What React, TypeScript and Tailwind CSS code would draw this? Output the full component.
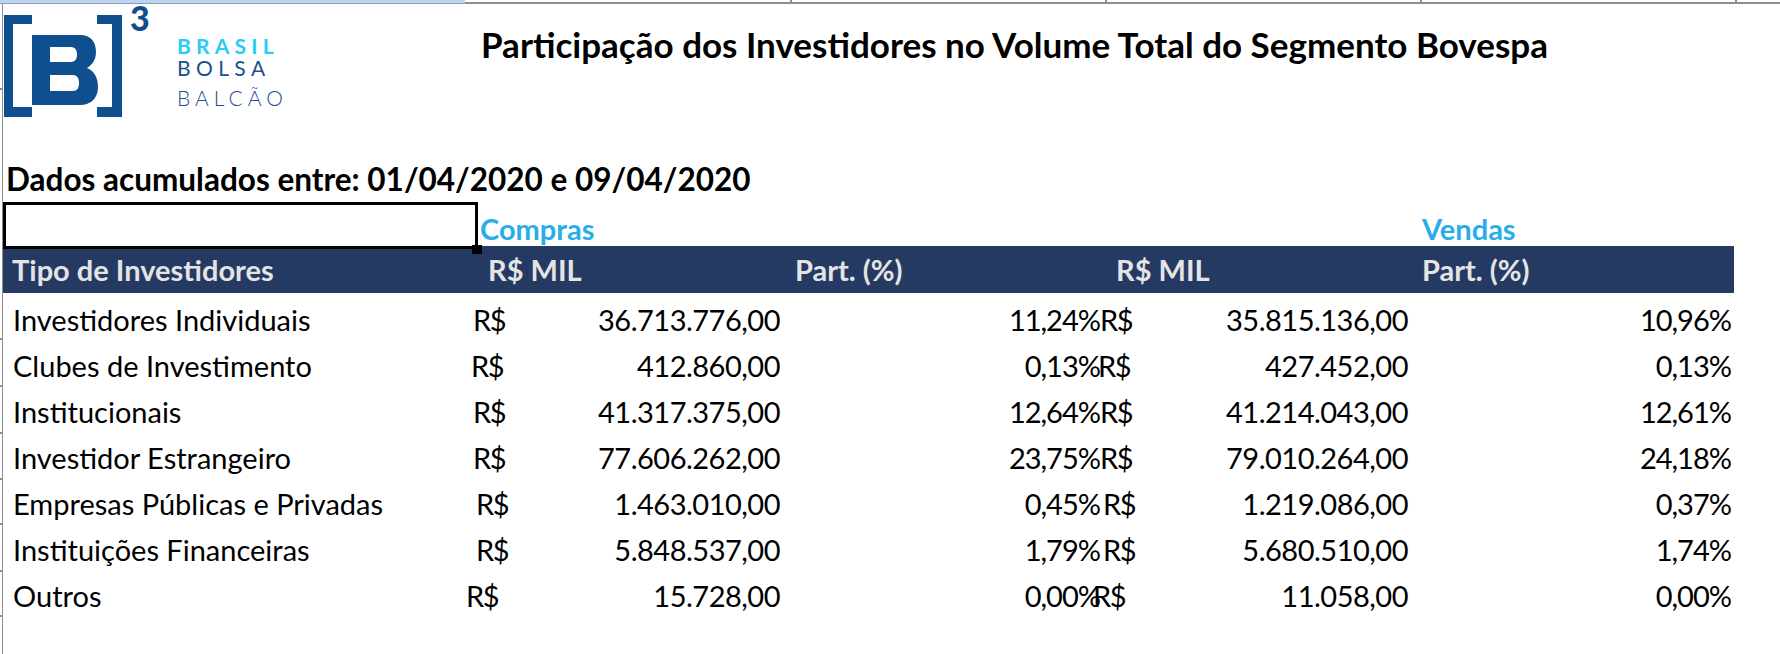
import React from 'react';

const rows = [
  { label: 'Investidores Individuais', a: '36.713.776,00', p: '11,24%', b: '35.815.136,00', q: '10,96%', o: 'ml-0' },
  { label: 'Clubes de Investimento', a: '412.860,00', p: '0,13%', b: '427.452,00', q: '0,13%', o: '-ml-[2px]' },
  { label: 'Institucionais', a: '41.317.375,00', p: '12,64%', b: '41.214.043,00', q: '12,61%', o: 'ml-0' },
  { label: 'Investidor Estrangeiro', a: '77.606.262,00', p: '23,75%', b: '79.010.264,00', q: '24,18%', o: 'ml-0' },
  { label: 'Empresas Públicas e Privadas', a: '1.463.010,00', p: '0,45%', b: '1.219.086,00', q: '0,37%', o: 'ml-[3px]' },
  { label: 'Instituições Financeiras', a: '5.848.537,00', p: '1,79%', b: '5.680.510,00', q: '1,74%', o: 'ml-[3px]' },
  { label: 'Outros', a: '15.728,00', p: '0,00%', b: '11.058,00', q: '0,00%', o: '-ml-[7px]' },
];

const ticks = [88, 338, 385, 432, 478, 523, 570, 615];

function Logo() {
  return (
    <div className="relative w-[157px] h-[121px] shrink-0">
      <svg width="157" height="121" viewBox="3 4 157 121">
        <polygon fill="#0f4e8f" points="4,15 32,15 32,24 13,24 13,107 32,107 32,117 4,117" />
        <polygon fill="#0f4e8f" points="97,15 122,15 122,117 97,117 97,107 112,107 112,24 97,24" />
        <path
          fill="#0f4e8f"
          fillRule="evenodd"
          d="M32 35 H80 C91 35 96 42 96 52 C96 60 92 65 87 68 C94 71 98 77 98 87 C98 98 91 105 80 105 H32 Z M50 47 H71 C75 47 77 50 77 54.5 C77 59 75 62 71 62 H50 Z M50 75 H73 C77 75 79 78 79 83 C79 88 77 91 73 91 H50 Z"
        />
      </svg>
      <span className="absolute left-[127px] -top-[3px] text-[34px] leading-[34px] font-black text-[#0f4e8f]">3</span>
    </div>
  );
}

export default function App() {
  return (
    <div className="relative w-[1780px] h-[654px] overflow-hidden bg-white font-['Lato',sans-serif] text-black">
      {/* top grid strip */}
      <div className="flex h-[4px]">
        <div className="w-[465px] h-[4px] bg-[#bcd3f1] border-b border-[#8d9bb0]" />
        <div className="relative flex-1 h-[4px] border-b-2 border-[#8e8e8e]">
          <div className="absolute left-[325px] top-0 w-[2px] h-[4px] bg-[#8e8e8e]" />
          <div className="absolute left-[640px] top-0 w-[2px] h-[4px] bg-[#8e8e8e]" />
          <div className="absolute left-[955px] top-0 w-[2px] h-[4px] bg-[#8e8e8e]" />
          <div className="absolute left-[1270px] top-0 w-[2px] h-[4px] bg-[#8e8e8e]" />
        </div>
      </div>

      {/* left row-header ticks */}
      {ticks.map((t) => (
        <div key={t} className="absolute left-0 w-[3px] h-[2px] bg-[#8e8e8e]" style={{ top: t }} />
      ))}

      <div className="ml-[2px] border-l border-[#8e8e8e] h-[650px]">
        {/* logo + title */}
        <div className="flex h-[154px]">
          <Logo />
          <div className="ml-[17px] mt-[31px] flex flex-col w-[140px]">
            <div className="h-[21px] leading-[21px] text-[21px] font-bold tracking-[5.2px] text-[#27cdf4]">BRASIL</div>
            <div className="mt-[1px] h-[21px] leading-[21px] text-[21px] font-normal tracking-[5.4px] text-[#1b4f90]">BOLSA</div>
            <div className="mt-[9px] h-[21px] leading-[21px] text-[21px] font-light tracking-[5px] text-[#1b4f90]">BALCÃO</div>
          </div>
          <div className="ml-[164px] mt-[20px] h-[40px] leading-[40px] text-[35px] font-bold whitespace-nowrap">
            Participação dos Investidores no Volume Total do Segmento Bovespa
          </div>
        </div>

        {/* Dados */}
        <div className="h-[44px] flex items-center pl-[3px] text-[31.5px] font-bold whitespace-nowrap">
          Dados acumulados entre: 01/04/2020 e 09/04/2020
        </div>

        {/* Compras / Vendas */}
        <div className="flex h-[44px]">
          <div className="relative w-[475px] h-[47px] border-[3px] border-black shrink-0">
            <div className="absolute -right-[7px] -bottom-[8px] w-[10px] h-[9px] bg-black" />
          </div>
          <div className="w-[944px] pl-[2px] pt-[10px] flex items-center text-[29px] font-bold text-[#27aee9]">Compras</div>
          <div className="pt-[10px] flex items-center text-[29px] font-bold text-[#27aee9]">Vendas</div>
        </div>

        {/* header band */}
        <div className="flex items-center w-[1731px] h-[47px] bg-[#243a63] text-[29px] font-bold text-[#e4e4e4] whitespace-nowrap">
          <div className="w-[485px] pl-[9px]">Tipo de Investidores</div>
          <div className="w-[307px]">R$ MIL</div>
          <div className="w-[321px]">Part. (%)</div>
          <div className="w-[306px]">R$ MIL</div>
          <div>Part. (%)</div>
        </div>

        {/* data rows */}
        <div className="pt-[4px]">
          {rows.map((r) => (
            <div key={r.label} className="flex items-center h-[46px] text-[29px] whitespace-nowrap">
              <div className="w-[463px] pl-[10px]">{r.label}</div>
              <div className="w-[120px] pl-[7px]"><span className={r.o + ' inline-block tracking-[-1.5px]'}>R$</span></div>
              <div className="w-[194px] text-right tracking-[-0.5px]">{r.a}</div>
              <div className="w-[320px] text-right tracking-[-1px]">{r.p}</div>
              <div className="w-[100px]"><span className={r.o + ' inline-block tracking-[-1.5px]'}>R$</span></div>
              <div className="w-[208px] text-right tracking-[-0.5px]">{r.b}</div>
              <div className="w-[323px] text-right tracking-[-1px]">{r.q}</div>
            </div>
          ))}
        </div>
      </div>
    </div>
  );
}
